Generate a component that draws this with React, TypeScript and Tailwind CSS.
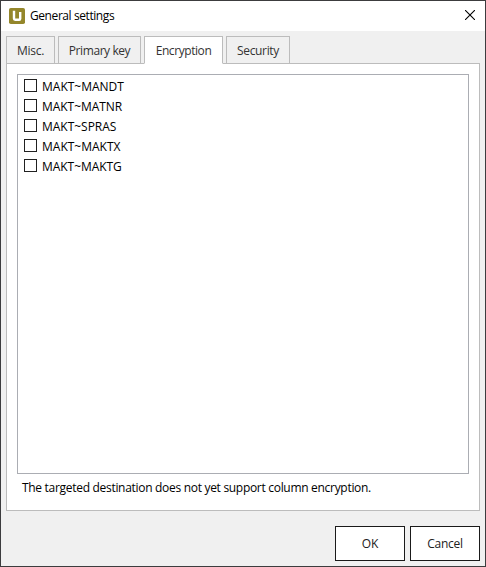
const tabs = [
  { label: 'Misc.', width: 'w-[49px]', tracking: 'tracking-[-0.25px]' },
  { label: 'Primary key', width: 'w-[83px]', tracking: 'tracking-[-0.42px]' },
  { label: 'Encryption', width: 'w-[79px]', tracking: 'tracking-[-0.42px]', active: true },
  { label: 'Security', width: 'w-[64px]', tracking: 'tracking-[-0.35px]' },
];

const columns = [
  { name: 'MAKT~MANDT', tracking: 'tracking-[0px]' },
  { name: 'MAKT~MATNR', tracking: 'tracking-[-0.05px]' },
  { name: 'MAKT~SPRAS', tracking: 'tracking-[-0.02px]' },
  { name: 'MAKT~MAKTX', tracking: 'tracking-[0px]' },
  { name: 'MAKT~MAKTG', tracking: 'tracking-[-0.05px]' },
];

function Logo() {
  return (
    <svg width="16" height="16" viewBox="0 0 16 16" aria-hidden="true">
      <rect width="16" height="16" rx="1.8" fill="#94862b" />
      <path d="M5 2.8V10.6Q5 11.8 6.2 11.8H10.2Q11.2 11.8 11.2 10.8V4" fill="none" stroke="#fff" strokeWidth="2.4" />
    </svg>
  );
}

export default function App() {
  return (
    <div className="flex h-[567px] w-[486px] flex-col border border-[#3c3c3e] bg-[#f0f0f0] font-['Open_Sans','Noto_Sans',sans-serif] text-[12px] leading-4 text-black">
      <header className="flex h-[30px] shrink-0 items-center bg-white pl-2 pr-[10px]">
        <Logo />
        <span className="ml-[5px] whitespace-nowrap tracking-[-0.42px]">General settings</span>
        <button aria-label="Close" className="ml-auto">
          <svg width="10" height="10" viewBox="0 0 10 10" className="block -translate-y-px">
            <path d="M0 0L10 10M10 0L0 10" stroke="#000" strokeWidth="1.1" />
          </svg>
        </button>
      </header>

      <main className="px-[5px] pt-[5px]">
        <div className="flex h-7 gap-[3px]" role="tablist">
          {tabs.map((tab) => (
            <button
              key={tab.label}
              role="tab"
              aria-selected={!!tab.active}
              className={`flex shrink-0 justify-center whitespace-nowrap border border-[#bcbcbc] pt-[6px] text-[#333] ${tab.width} ${tab.tracking} ${
                tab.active ? 'relative border-b-white bg-white' : 'bg-[#f0f0f0]'
              }`}
            >
              {tab.label}
            </button>
          ))}
        </div>
        <section className="-mt-px h-[448px] w-[474px] border border-[#bcbcbc] bg-white px-[10px] pt-[10px]">
          <div className="h-[400px] border border-[#abadb3] pl-[6px] pt-[2px]">
            {columns.map((column) => (
              <label key={column.name} className="flex h-5 items-center">
                <input
                  type="checkbox"
                  className="mb-[3px] size-[13px] shrink-0 appearance-none border border-[#212121] bg-white"
                />
                <span className={`ml-[5px] whitespace-nowrap ${column.tracking}`}>{column.name}</span>
              </label>
            ))}
          </div>
          <p className="ml-[5px] mt-[6px] whitespace-nowrap tracking-[-0.3px]">
            The targeted destination does not yet support column encryption.
          </p>
        </section>
      </main>

      <footer className="mt-[15px] flex justify-end gap-[5px] pr-[5px]">
        <button className="h-[35px] w-[70px] border border-[#1a1a1a] bg-white text-[#212121]">OK</button>
        <button className="h-[35px] w-[70px] border border-[#1a1a1a] bg-white tracking-[-0.3px] text-[#212121]">Cancel</button>
      </footer>
    </div>
  );
}
